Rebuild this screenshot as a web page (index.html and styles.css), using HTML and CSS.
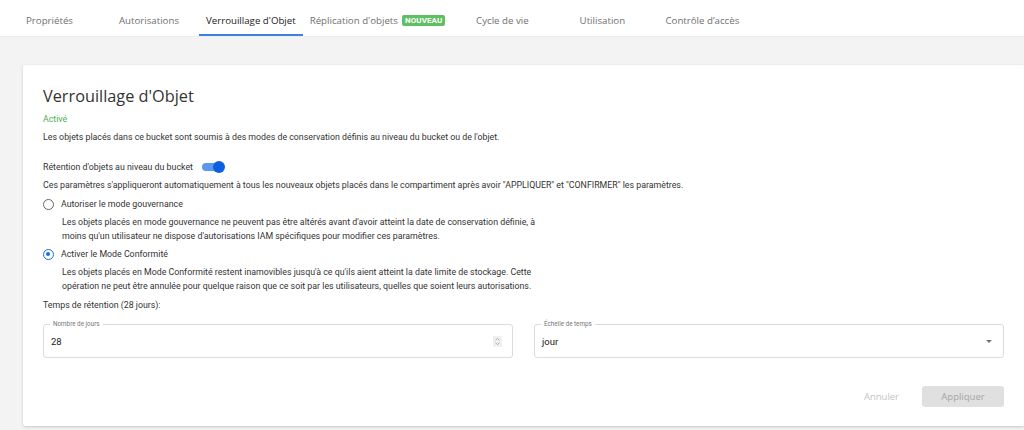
FILE: index.html
```html
<!DOCTYPE html>
<html lang="fr">
<head>
<meta charset="utf-8">
<link rel="stylesheet" href="styles.css">
</head>
<body>
<nav class="tabs">
  <div class="tab">Propriétés</div>
  <div class="tab">Autorisations</div>
  <div class="tab active">Verrouillage d'Objet</div>
  <div class="tab">Réplication d'objets <span class="badge">NOUVEAU</span></div>
  <div class="tab">Cycle de vie</div>
  <div class="tab">Utilisation</div>
  <div class="tab">Contrôle d’accès</div>
</nav>
<main class="page">
  <section class="card">
    <h1 class="title">Verrouillage d'Objet</h1>
    <div class="status">Activé</div>
    <p class="text intro">Les objets placés dans ce bucket sont soumis à des modes de conservation définis au niveau du bucket ou de l'objet.</p>
    <div class="toggle-row">
      <span class="text">Rétention d'objets au niveau du bucket</span>
      <span class="switch"><span class="track"></span><span class="thumb"></span></span>
    </div>
    <p class="text note">Ces paramètres s'appliqueront automatiquement à tous les nouveaux objets placés dans le compartiment après avoir "APPLIQUER" et "CONFIRMER" les paramètres.</p>
    <div class="radio-row">
      <span class="radio"></span>
      <span class="text">Autoriser le mode gouvernance</span>
    </div>
    <p class="text help">Les objets placés en mode gouvernance ne peuvent pas être altérés avant d'avoir atteint la date de conservation définie, à moins qu'un utilisateur ne dispose d'autorisations IAM spécifiques pour modifier ces paramètres.</p>
    <div class="radio-row">
      <span class="radio checked"></span>
      <span class="text">Activer le Mode Conformité</span>
    </div>
    <p class="text help">Les objets placés en Mode Conformité restent inamovibles jusqu'à ce qu'ils aient atteint la date limite de stockage. Cette opération ne peut être annulée pour quelque raison que ce soit par les utilisateurs, quelles que soient leurs autorisations.</p>
    <p class="text retention">Temps de rétention (28 jours):</p>
    <div class="fields">
      <div class="field">
        <span class="legend">Nombre de jours</span>
        <span class="value">28</span>
        <span class="spinner">
          <svg width="7" height="9" viewBox="0 0 7 9"><path d="M1.5 3.2 L3.5 1.5 L5.5 3.2 M1.5 5.8 L3.5 7.5 L5.5 5.8" fill="none" stroke="#9a9a9a" stroke-width="0.8"/></svg>
        </span>
      </div>
      <div class="field">
        <span class="legend">Échelle de temps</span>
        <span class="value">jour</span>
        <svg class="caret" width="8" height="5" viewBox="0 0 8 5"><path d="M1 1 L7 1 L4 4 Z" fill="#757575"/></svg>
      </div>
    </div>
    <div class="actions">
      <span class="btn-text">Annuler</span>
      <span class="btn-apply">Appliquer</span>
    </div>
  </section>
</main>
</body>
</html>
```

FILE: styles.css
```css
* { box-sizing: border-box; }
html, body { margin: 0; padding: 0; }
body {
  width: 1024px;
  height: 430px;
  overflow: hidden;
  background: #f3f3f3;
  font-family: Roboto, "Liberation Sans", sans-serif;
  color: #333;
}
.tabs {
  display: flex;
  height: 37px;
  background: #fff;
  border-bottom: 1px solid #ececec;
}
.tab {
  min-width: 100px;
  padding: 6px 7px 0;
  display: flex;
  align-items: center;
  justify-content: center;
  font-family: "Open Sans", "Liberation Sans", sans-serif;
  font-size: 9.7px;
  color: #707070;
  border-bottom: 2px solid transparent;
  white-space: nowrap;
}
.tab:first-child { min-width: 99px; }
.tab.active {
  color: #222;
  border-bottom-color: #3f7fe0;
}
.badge {
  margin-left: 4px;
  background: #5fbf63;
  color: #fff;
  font-family: Roboto, sans-serif;
  font-weight: 700;
  font-size: 8px;
  padding: 1px 3px;
  border-radius: 2px;
  letter-spacing: 0.1px;
}
.page {
  padding: 28px 0 0 23px;
}
.card {
  background: #fff;
  height: 361px;
  box-shadow: 0 1px 3px rgba(0,0,0,0.18);
  border-radius: 3px 0 0 3px;
  padding: 20px 20px 0 20px;
}
.title {
  margin: 0;
  font-family: "Open Sans", "Liberation Sans", sans-serif;
  font-weight: 400;
  font-size: 16.3px;
  line-height: 22px;
  color: #333;
}
.status {
  margin-top: 6px;
  font-size: 8.8px;
  line-height: 12px;
  color: #4caf50;
}
.text {
  font-size: 8.8px;
  line-height: 14px;
  color: #333;
  margin: 0;
}
.intro { margin-top: 5px; }
.toggle-row {
  display: flex;
  align-items: center;
  gap: 8px;
  margin-top: 14px;
  height: 18px;
}
.switch {
  position: relative;
  width: 24px;
  height: 14px;
  display: inline-block;
}
.track {
  position: absolute;
  left: 1px;
  top: 3px;
  width: 20px;
  height: 8px;
  border-radius: 4px;
  background: #5b96ef;
}
.thumb {
  position: absolute;
  right: 0;
  top: 1px;
  width: 12px;
  height: 12px;
  border-radius: 50%;
  background: #0b5fe0;
}
.note { margin-top: 2px; }
.radio-row {
  display: flex;
  align-items: center;
  gap: 7px;
  margin-top: 4px;
  height: 16px;
}
.help + .radio-row { margin-top: 3px; }
.radio {
  width: 11px;
  height: 11px;
  border-radius: 50%;
  border: 1.3px solid #666;
  position: relative;
}
.radio.checked { border-color: #1a6ddd; }
.radio.checked::after {
  content: "";
  position: absolute;
  left: 2px; top: 2px;
  width: 4.4px; height: 4.4px;
  border-radius: 50%;
  background: #1a6ddd;
}
.help {
  padding-left: 19px;
  margin-top: 3px;
  width: 510px;
}
.retention { margin-top: 5px; }
.fields {
  display: flex;
  gap: 21px;
  margin-top: 12px;
}
.field {
  position: relative;
  flex: 1;
  height: 34px;
  border: 1px solid #dcdcdc;
  border-radius: 3px;
  display: flex;
  align-items: center;
  padding: 1px 8px 0 7px;
}
.legend {
  position: absolute;
  top: -5px;
  left: 6px;
  background: #fff;
  padding: 0 3px;
  font-size: 6.3px;
  line-height: 9px;
  color: #777;
}
.value {
  font-size: 9.5px;
  color: #222;
  flex: 1;
}
.spinner {
  width: 9px;
  height: 11px;
  background: #f0f0f0;
  display: flex;
  align-items: center;
  justify-content: center;
  margin-right: 2px;
}
.caret { margin-right: 2px; }
.actions {
  display: flex;
  justify-content: flex-end;
  align-items: center;
  margin-top: 28px;
  gap: 23px;
}
.btn-text {
  font-family: "Open Sans", sans-serif;
  font-size: 9.5px;
  color: #c4c4c4;
}
.btn-apply {
  width: 82px;
  height: 21px;
  background: #e0e0e0;
  border-radius: 3px;
  display: flex;
  align-items: center;
  justify-content: center;
  font-family: "Open Sans", sans-serif;
  font-size: 9.5px;
  color: #a5a5a5;
}
```
